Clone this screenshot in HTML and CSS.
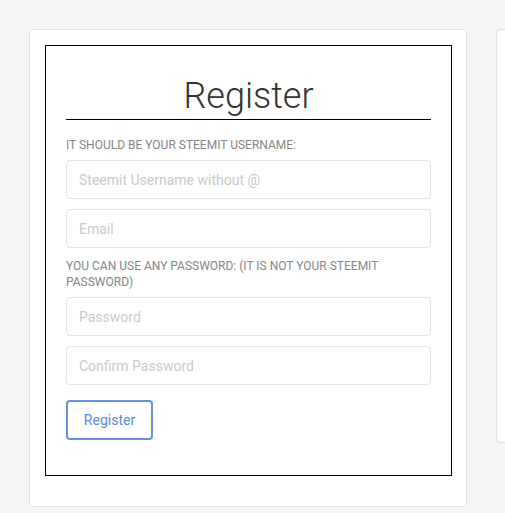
FILE: index.html
```html
<!DOCTYPE html>
<html>
<head>
<meta charset="utf-8">
<link rel="stylesheet" href="styles.css">
</head>
<body>
<div class="page">
  <div class="card">
    <div class="box">
      <h1 class="title">Register</h1>
      <div class="label first">It should be your Steemit username:</div>
      <input class="field" type="text" placeholder="Steemit Username without @">
      <input class="field" type="text" placeholder="Email">
      <div class="label">You can use any password: (it is not your Steemit password)</div>
      <input class="field" type="password" placeholder="Password">
      <input class="field" type="password" placeholder="Confirm Password">
      <button class="btn">Register</button>
    </div>
  </div>
  <div class="card side"></div>
</div>
</body>
</html>
```

FILE: styles.css
```css
html, body {
  margin: 0;
  padding: 0;
  background: #f5f5f5;
  overflow: hidden;
  font-family: Roboto, "Liberation Sans", sans-serif;
}
.page {
  display: flex;
  align-items: flex-start;
  gap: 29px;
  padding: 29px 0 0 29px;
}
.card {
  flex: none;
  box-sizing: border-box;
  width: 438px;
  background: #fff;
  border: 1px solid #e3e3e3;
  border-radius: 4px;
  padding: 15px 14px 30px 15px;
}
.card.side {
  width: 9px;
  height: 414px;
  padding: 0;
  border-right: 0;
  border-radius: 4px 0 0 4px;
}
.box {
  border: 1px solid #000;
  padding: 29px 20px 35px 20px;
  display: flex;
  flex-direction: column;
  align-items: stretch;
}
.title {
  margin: 0;
  font-size: 36px;
  font-weight: 300;
  line-height: 42px;
  color: #333;
  text-align: center;
  padding-bottom: 2px;
  border-bottom: 1px solid #000;
}
.label {
  font-size: 12px;
  line-height: 16px;
  color: #858585;
  text-transform: uppercase;
  margin: 0 0 7px 0;
}
.label.first {
  margin-top: 17px;
}
.field {
  box-sizing: border-box;
  height: 39px;
  margin: 0 0 10px 0;
  padding: 0 12px;
  border: 1px solid #e4e4e4;
  border-radius: 4px;
  font-family: Roboto, "Liberation Sans", sans-serif;
  font-size: 14px;
  color: #333;
  outline: none;
  background: #fff;
}
.field::placeholder {
  color: #cacaca;
}
.btn {
  align-self: flex-start;
  box-sizing: border-box;
  margin-top: 5px;
  width: 87px;
  height: 40px;
  border: 2px solid #6590e0;
  border-radius: 4px;
  background: #fff;
  color: #5d89d9;
  font-family: Roboto, "Liberation Sans", sans-serif;
  font-size: 14px;
  padding: 0;
}
```
